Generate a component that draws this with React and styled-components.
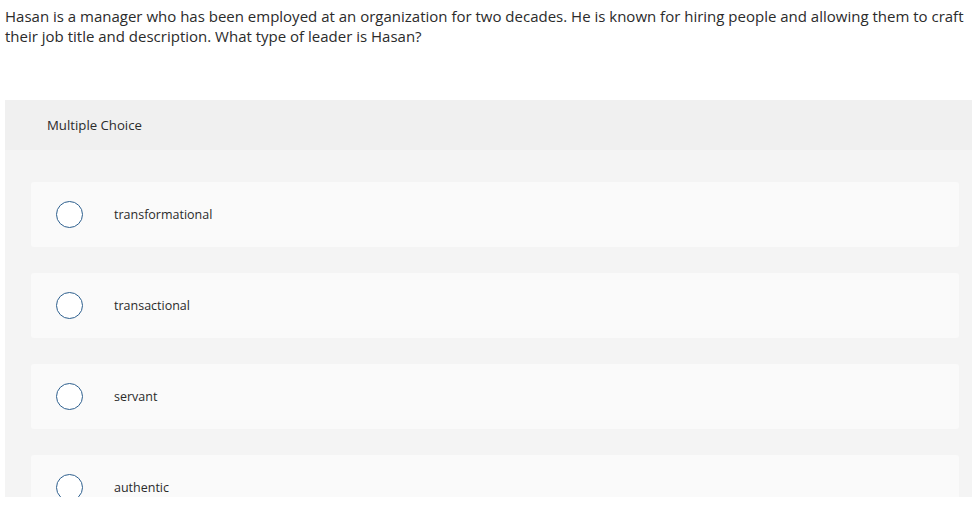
import React from "react";
import styled, { createGlobalStyle } from "styled-components";

const Global = createGlobalStyle`
  html, body { margin: 0; padding: 0; background: #ffffff; }
  body { font-family: "Open Sans", "Liberation Sans", sans-serif; color: #2b2b2b; }
`;

const Page = styled.div`
  padding: 6px 0 0 5px;
  width: 967px;
`;

const Question = styled.p`
  margin: 0;
  padding-right: 0;
  font-size: 15px;
  line-height: 20px;
  color: #2b2b2b;
`;

const Panel = styled.section`
  margin-top: 54px;
  height: 397px;
  overflow: hidden;
  background: #f4f4f4;
`;

const PanelHeader = styled.div`
  height: 50px;
  display: flex;
  align-items: center;
  padding-left: 42px;
  background: #f0f0f0;
  font-size: 13.2px;
  color: #2b2b2b;
`;

const OptionList = styled.div`
  display: flex;
  flex-direction: column;
  gap: 26px;
  padding: 32px 13px 0 26px;
`;

const Option = styled.label`
  height: 65px;
  flex-shrink: 0;
  display: flex;
  align-items: center;
  padding-left: 25px;
  background: #fafafa;
  border-radius: 3px;
  font-size: 12.5px;
  color: #2b2b2b;
  cursor: pointer;
`;

const Radio = styled.span`
  width: 25px;
  height: 25px;
  border: 1.5px solid #2d5f8e;
  border-radius: 50%;
  background: #ffffff;
  flex-shrink: 0;
  margin-right: 31px;
`;

const options = ["transformational", "transactional", "servant", "authentic"];

export default function App() {
  return (
    <>
      <Global />
      <Page>
        <Question>
          Hasan is a manager who has been employed at an organization for two decades. He is known for hiring people and allowing them to craft their job title and description. What type of leader is Hasan?
        </Question>
        <Panel>
          <PanelHeader>Multiple Choice</PanelHeader>
          <OptionList>
            {options.map((o) => (
              <Option key={o}>
                <Radio />
                {o}
              </Option>
            ))}
          </OptionList>
        </Panel>
      </Page>
    </>
  );
}
